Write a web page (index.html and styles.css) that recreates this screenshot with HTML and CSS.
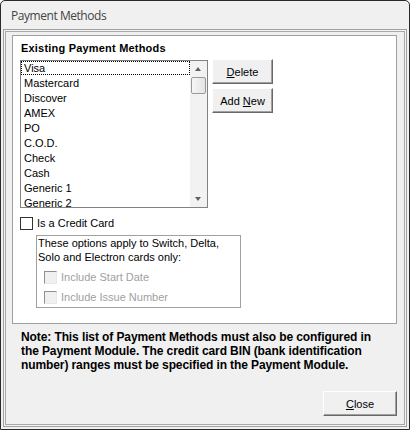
FILE: index.html
```html
<!DOCTYPE html>
<html>
<head>
<meta charset="utf-8">
<link rel="stylesheet" href="styles.css">
</head>
<body>
<div class="window">
  <div class="titlebar">Payment Methods</div>
  <div class="client">
    <div class="group">
      <div class="group-title">Existing Payment Methods</div>
      <div class="list-row">
        <div class="listbox">
          <div class="items">
            <div class="item focus">Visa</div>
            <div class="item">Mastercard</div>
            <div class="item">Discover</div>
            <div class="item">AMEX</div>
            <div class="item">PO</div>
            <div class="item">C.O.D.</div>
            <div class="item">Check</div>
            <div class="item">Cash</div>
            <div class="item">Generic 1</div>
            <div class="item">Generic 2</div>
          </div>
          <div class="vscroll">
            <div class="arrow up"></div>
            <div class="thumb"></div>
            <div class="track"></div>
            <div class="arrow down"></div>
          </div>
        </div>
        <div class="side-buttons">
          <button class="btn small"><u>D</u>elete</button>
          <button class="btn small">Add <u>N</u>ew</button>
        </div>
      </div>
      <label class="check-row">
        <span class="checkbox"></span>
        <span class="check-label">Is a Credit Card</span>
      </label>
      <div class="options">
        <div class="options-text">These options apply to Switch, Delta,<br>Solo and Electron cards only:</div>
        <div class="option-list">
          <div class="check-row disabled">
            <span class="checkbox"></span>
            <span class="check-label">Include Start Date</span>
          </div>
          <div class="check-row disabled">
            <span class="checkbox"></span>
            <span class="check-label">Include Issue Number</span>
          </div>
        </div>
      </div>
    </div>
    <div class="note">Note: This list of Payment Methods must also be configured in<br>the Payment Module. The credit card BIN (bank identification<br>number) ranges must be specified in the Payment Module.</div>
    <div class="footer">
      <button class="btn close"><u>C</u>lose</button>
    </div>
  </div>
</div>
</body>
</html>
```

FILE: styles.css
```css
* { box-sizing: border-box; }
html, body { margin: 0; padding: 0; background: #ffffff; }
body {
  font-family: "Liberation Sans", Arial, sans-serif;
  font-size: 11px;
  color: #000;
}
.window {
  width: 410px;
  height: 430px;
  border: 1px solid #2a2a2a;
  border-radius: 5px 5px 0 0;
  background: #f0f0f0;
  padding: 0 2px 2px 2px;
  display: flex;
  flex-direction: column;
}
.titlebar {
  height: 28px;
  padding: 6px 0 0 8px;
  font-family: "Open Sans", "Noto Sans", sans-serif;
  font-size: 12px;
  letter-spacing: -0.45px;
  line-height: 17px;
  color: #444;
}
.client {
  height: 398px;
  border: 1px solid #a0a0a0;
  box-shadow: inset 0 0 0 1px #f4f4f4, inset 0 0 0 2px #a8a8a8;
  padding: 5px 9px 10px 8px;
  display: flex;
  flex-direction: column;
}
.group {
  height: 289px;
  border: 1px solid #a0a0a0;
  background: #fff;
  padding: 5px 0 0 7px;
}
.group-title {
  font-weight: bold;
  line-height: 14px;
  padding-left: 1px;
  letter-spacing: 0.2px;
}
.list-row {
  display: flex;
  align-items: flex-start;
  gap: 4px;
  margin-top: 4px;
}
.listbox {
  margin-top: 1px;
  width: 188px;
  height: 148px;
  border: 1px solid #828282;
  display: flex;
  overflow: hidden;
  background: #fff;
}
.items { flex: 1; min-width: 0; }
.item {
  height: 15px;
  line-height: 15px;
  padding-left: 3px;
  white-space: nowrap;
}
.item.focus {
  outline: 1px dotted #000;
  outline-offset: -1px;
  height: 14px;
  line-height: 14px;
  margin-bottom: 1px;
}
.vscroll {
  width: 17px;
  background: #f2f2f2;
  display: flex;
  flex-direction: column;
  align-items: center;
}
.arrow {
  height: 16px;
  width: 17px;
  position: relative;
}
.arrow::after {
  content: "";
  position: absolute;
  left: 5px;
  border-left: 3.5px solid transparent;
  border-right: 3.5px solid transparent;
}
.arrow.up::after { top: 6px; border-bottom: 4px solid #606060; }
.arrow.down::after { top: 6px; border-top: 4px solid #606060; }
.thumb {
  width: 15px;
  height: 17px;
  border: 1px solid #9a9a9a;
  border-radius: 2px;
  background: linear-gradient(to right, #f6f6f6, #e4e4e4);
}
.track { flex: 1; }
.side-buttons {
  display: flex;
  flex-direction: column;
  gap: 4px;
}
.btn {
  font-family: "Liberation Sans", Arial, sans-serif;
  font-size: 11px;
  color: #000;
  background: #f0f0f0;
  border: 1px solid;
  border-color: #ffffff #696969 #696969 #ffffff;
  box-shadow: inset -1px -1px 0 #a0a0a0;
  padding: 0;
  margin: 0;
}
.btn.small { width: 61px; height: 25px; }
.check-row {
  display: flex;
  align-items: center;
  gap: 4px;
  height: 13px;
}
.group > .check-row { margin: 9px 0 0 0; }
.checkbox {
  width: 13px;
  height: 13px;
  border: 1px solid #333;
  background: #fff;
  flex: none;
}
.check-label { line-height: 13px; }
.options {
  margin: 5px 0 0 16px;
  width: 205px;
  height: 73px;
  border: 1px solid #a0a0a0;
  padding: 0 0 0 1px;
}
.options-text { line-height: 14px; }
.option-list {
  margin: 7px 0 0 6px;
  display: flex;
  flex-direction: column;
  gap: 7px;
}
.check-row.disabled .checkbox {
  border-color: #909090 #e8e8e8 #e8e8e8 #909090;
  background: #f0f0f0;
}
.check-row.disabled .check-label { color: #a0a0a0; }
.note {
  margin-top: 6px;
  padding-left: 9px;
  font-weight: bold;
  font-size: 12px;
  letter-spacing: -0.1px;
  line-height: 14px;
}
.footer {
  margin-top: auto;
  display: flex;
  justify-content: flex-end;
}
.btn.close { width: 74px; height: 25px; }
```
